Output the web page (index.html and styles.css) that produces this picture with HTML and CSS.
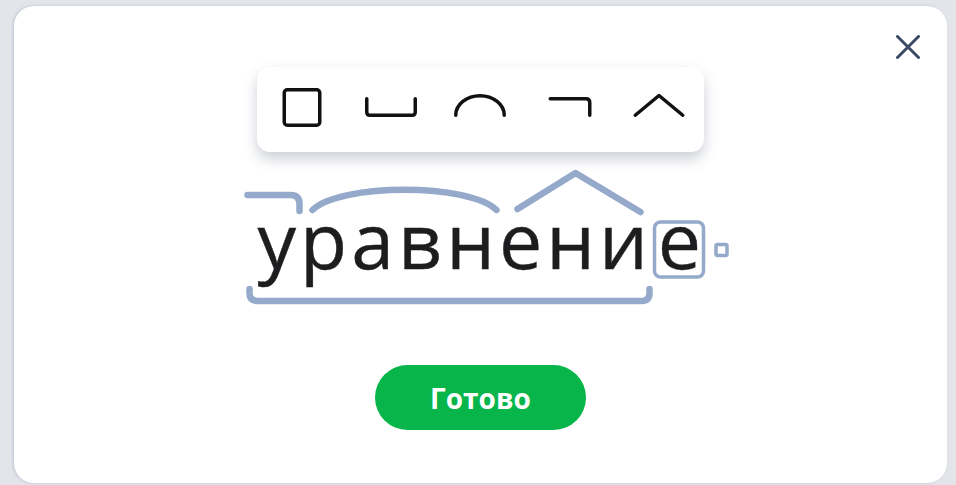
FILE: index.html
```html
<!DOCTYPE html>
<html lang="ru">
<head>
<meta charset="utf-8">
<title>Разбор слова</title>
<link rel="stylesheet" href="styles.css">
</head>
<body>
<div class="card">
  <button class="close" aria-label="Закрыть">
    <svg viewBox="0 0 24 24" width="24" height="24"><path d="M1.5 1.5 L22.5 22.5 M22.5 1.5 L1.5 22.5"/></svg>
  </button>

  <div class="toolbar">
    <button class="tool" title="Окончание">
      <svg viewBox="0 0 60 44"><rect x="12.25" y="3.75" width="35.5" height="35.5" rx="3"/></svg>
    </button>
    <button class="tool" title="Основа">
      <svg viewBox="0 0 60 44"><path d="M5.75 12.75 V26 Q5.75 29.25 9 29.25 H51 Q54.25 29.25 54.25 26 V12.75"/></svg>
    </button>
    <button class="tool" title="Корень">
      <svg viewBox="0 0 60 44"><path d="M5.75 29.25 A24.25 19.5 0 0 1 54.25 29.25"/></svg>
    </button>
    <button class="tool" title="Приставка">
      <svg viewBox="0 0 60 44"><path d="M10.25 12.75 H46 Q49.75 12.75 49.75 16.5 V29.25"/></svg>
    </button>
    <button class="tool" title="Суффикс">
      <svg viewBox="0 0 60 44"><path d="M6.25 29.25 L30 9.5 L53.75 29.25"/></svg>
    </button>
  </div>

  <div class="word-area">
    <svg class="marks" viewBox="221.5 165 520 140">
      <!-- приставка -->
      <path d="M248 195 H291 Q300 195 300 204 V211"/>
      <!-- корень -->
      <path d="M313 210 C340 183 470 183 497 210"/>
      <!-- суффикс -->
      <path d="M518 209 L576 173 L641 212"/>
      <!-- основа -->
      <path d="M250 289 V293 Q250 301 258 301 H642 Q650 301 650 293 V289"/>
      <!-- окончание -->
      <rect class="thin" x="655" y="222" width="49" height="55" rx="6"/>
      <rect class="thin" x="716.5" y="244.5" width="11" height="11" rx="1.5"/>
    </svg>
    <div class="word">уравнени<span class="ending">е</span></div>
  </div>

  <button class="done">Готово</button>
</div>
</body>
</html>
```

FILE: styles.css
```css
* {
  box-sizing: border-box;
}

html,
body {
  margin: 0;
  height: 100%;
}

body {
  background: #e3e5ea;
  padding: 6px 9px 2px 14px;
  font-family: "Open Sans", "Noto Sans", sans-serif;
}

.card {
  position: relative;
  height: 477px;
  background: #fff;
  border-radius: 20px;
  box-shadow: -1px 0 3px rgba(120, 130, 155, 0.35);
  display: flex;
  flex-direction: column;
  align-items: center;
}

.close {
  position: absolute;
  top: 29px;
  right: 27px;
  width: 24px;
  height: 24px;
  padding: 0;
  border: 0;
  background: none;
  cursor: pointer;
}

.close svg {
  display: block;
  fill: none;
  stroke: #3b4a66;
  stroke-width: 3;
  stroke-linecap: round;
}

.toolbar {
  margin-top: 61px;
  width: 447px;
  height: 85px;
  padding-top: 19px;
  background: #fff;
  border-radius: 13px;
  box-shadow: 0 7px 14px rgba(60, 72, 100, 0.26);
  display: grid;
  grid-template-columns: repeat(5, 1fr);
  align-items: start;
  justify-items: center;
}

.tool {
  width: 60px;
  height: 44px;
  padding: 0;
  border: 0;
  background: none;
  cursor: pointer;
}

.tool svg {
  display: block;
  width: 60px;
  height: 44px;
  fill: none;
  stroke: #111;
  stroke-width: 3.5;
  stroke-linecap: round;
  stroke-linejoin: round;
}

.word-area {
  position: relative;
  margin-top: 13px;
  width: 520px;
  height: 140px;
  padding: 37px 0 0 37px;
}

.marks {
  position: absolute;
  inset: 0;
  width: 520px;
  height: 140px;
  fill: none;
  stroke: #95a9ca;
  stroke-width: 6.5;
  stroke-linecap: round;
  stroke-linejoin: round;
}

.marks .thin {
  stroke-width: 3.5;
}

.word {
  font-size: 77px;
  line-height: 76px;
  letter-spacing: 4px;
  color: #1d1d1f;
  -webkit-text-stroke: 0.4px #1d1d1f;
}

.ending {
  margin-left: 6px;
}

.done {
  margin-top: 60px;
  width: 211px;
  height: 65px;
  border: 0;
  border-radius: 33px;
  background: #08b54a;
  color: #fff;
  font-family: "Open Sans", "Noto Sans", sans-serif;
  font-weight: 700;
  font-size: 28px;
  cursor: pointer;
}
```
